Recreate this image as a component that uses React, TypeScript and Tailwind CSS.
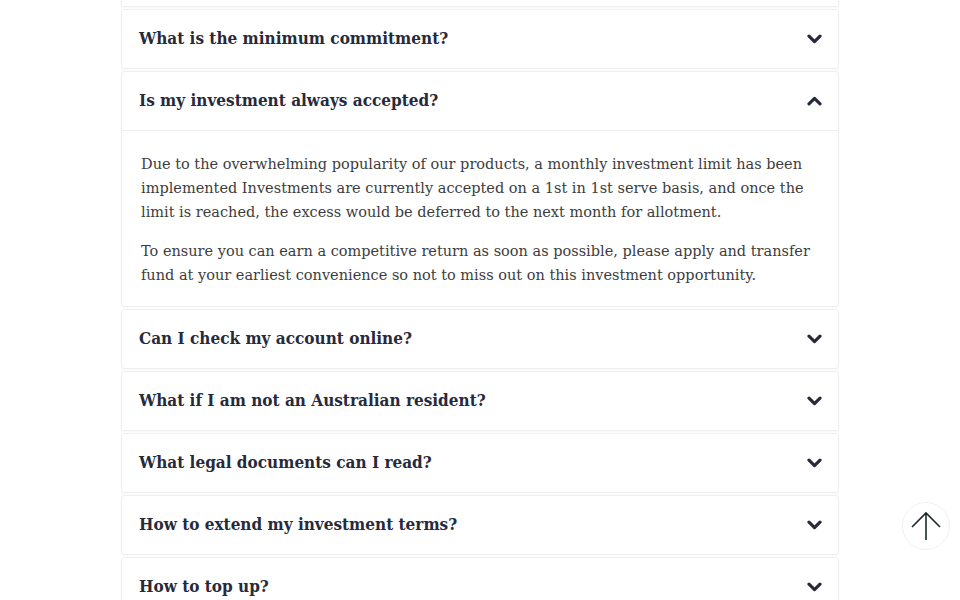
import { useState } from "react";

const faqs = [
    { q: "Is there a fee to join?", a: [] as string[] },
    { q: "What is the minimum commitment?", a: [] as string[] },
    {
        q: "Is my investment always accepted?",
        a: [
            "Due to the overwhelming popularity of our products, a monthly investment limit has been implemented Investments are currently accepted on a 1st in 1st serve basis, and once the limit is reached, the excess would be deferred to the next month for allotment.",
            "To ensure you can earn a competitive return as soon as possible, please apply and transfer fund at your earliest convenience so not to miss out on this investment opportunity.",
        ],
    },
    { q: "Can I check my account online?", a: [] as string[] },
    { q: "What if I am not an Australian resident?", a: [] as string[] },
    { q: "What legal documents can I read?", a: [] as string[] },
    { q: "How to extend my investment terms?", a: [] as string[] },
    { q: "How to top up?", a: [] as string[] },
];

function Chevron({ up }: { up: boolean }) {
    return (
        <svg width="15" height="10" viewBox="0 0 15 10" className={up ? "rotate-180" : ""}>
            <path d="M2 2.2 L7.5 7.6 L13 2.2" fill="none" stroke="#262a3b" strokeWidth="3.2" strokeLinecap="round" strokeLinejoin="round" />
        </svg>
    );
}

export default function App() {
    const [open, setOpen] = useState(2);

    return (
        <div className="h-[600px] bg-white overflow-hidden font-['DejaVu_Serif',serif]">
            <div className="mx-auto w-[718px] -mt-[53px] flex flex-col gap-[2px]">
                {faqs.map((f, i) => (
                    <div key={i} className="bg-white border border-[#efefef] rounded-[3px] shadow-[0_1px_2px_rgba(0,0,0,0.03)]">
                        <button
                            onClick={() => setOpen(open === i ? -1 : i)}
                            className="w-full h-[58px] flex items-center justify-between pl-[17px] pr-[16px] text-left"
                        >
                            <span className="text-[17px] font-bold font-stretch-condensed text-[#262a3b]">{f.q}</span>
                            <Chevron up={open === i} />
                        </button>
                        {open === i && f.a.length > 0 && (
                            <div className="border-t border-[#efefef] px-[19px] pt-[21px] pb-[19px] flex flex-col gap-[15px]">
                                {f.a.map((p, j) => (
                                    <p key={j} className="text-[14.5px] leading-[24px] text-[#3d3d3d]">{p}</p>
                                ))}
                            </div>
                        )}
                    </div>
                ))}
            </div>

            <button className="fixed right-[10px] bottom-[50px] w-[48px] h-[48px] rounded-full bg-white border border-[#f0f0f0] flex items-center justify-center">
                <svg width="32" height="32" viewBox="0 0 32 32">
                    <path d="M16 3 V30 M2 17 L16 3 L30 17" fill="none" stroke="#1d2a2a" strokeWidth="1.6" />
                </svg>
            </button>
        </div>
    );
}
